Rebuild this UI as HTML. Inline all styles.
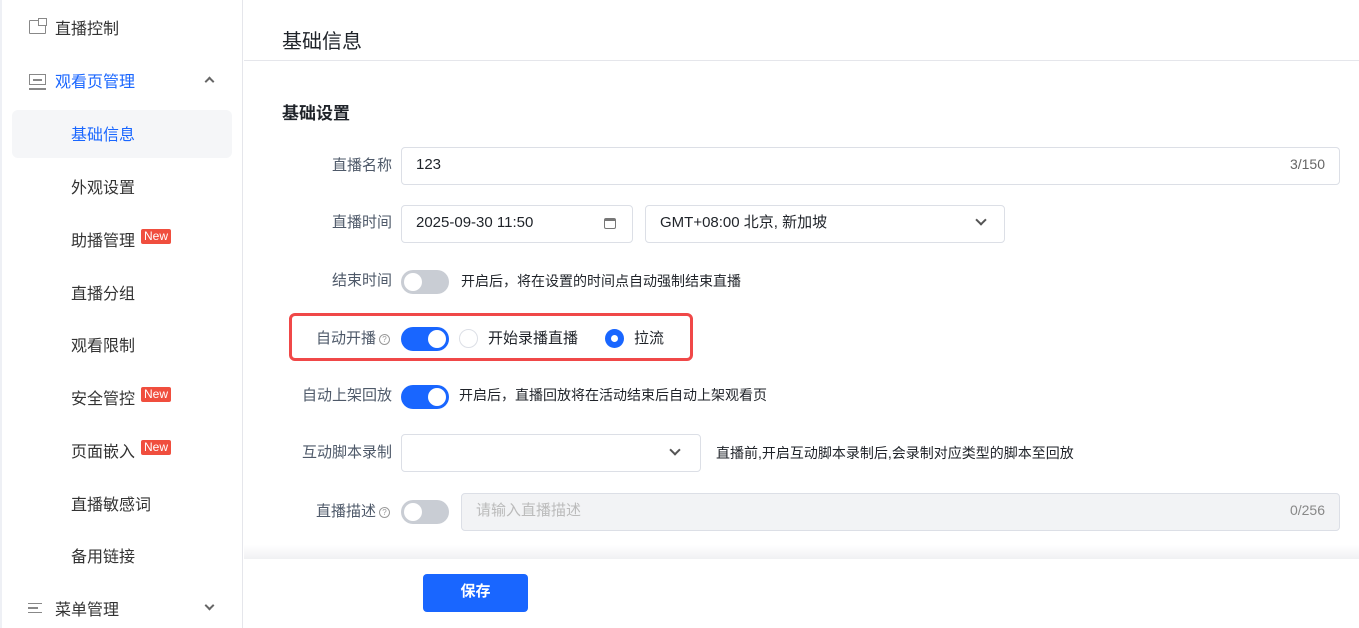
<!DOCTYPE html>
<html><head><meta charset="utf-8"><style>
*{margin:0;padding:0;box-sizing:border-box}
body{width:1359px;height:628px;overflow:hidden;background:#fff;font-family:"Liberation Sans","Noto Sans CJK SC",sans-serif;color:#1f2329;position:relative}
.a{position:absolute;white-space:nowrap}
.side{position:absolute;left:0;top:0;width:243px;height:628px;border-right:1px solid #e5e6eb;border-left:2px solid #eef0f5}
.mi{position:absolute;font-size:16px;color:#333;margin-top:-3px}
.new{display:inline-block;background:#f04e3e;color:#fff;font-size:12px;line-height:15px;padding:0 3px;border-radius:2px;position:relative;top:-6px;margin-left:6px}
.lbl{position:absolute;font-size:15px;color:#4e5969;text-align:right;width:110px;left:282px;margin-top:-3px}
.inp{position:absolute;border:1px solid #dcdfe6;border-radius:4px;background:#fff;font-size:15px;padding-left:14px;line-height:33px}
.sw{position:absolute;width:48px;height:24px;border-radius:12px;background:#c9cdd4}
.sw::after{content:"";position:absolute;top:3px;left:3px;width:18px;height:18px;border-radius:50%;background:#fff}
.sw.on{background:#1966ff}
.sw.on::after{left:27px}
.t{position:absolute;font-size:14px;color:#1f2329;margin-top:-2px}
.q{display:inline-block;width:11px;height:11px;border:1px solid #999;border-radius:50%;font-size:8px;line-height:9px;text-align:center;color:#999;vertical-align:1px;margin-left:3px}
.chev{position:absolute;width:8px;height:8px;border-right:2px solid #555;border-bottom:2px solid #555;transform:rotate(45deg)}
</style></head><body>
<div class="side">
<div class="a" style="left:27px;top:20px;width:17px;height:14px;border:1.5px solid #888;border-radius:1px"></div>
<div class="a" style="left:36px;top:18px;width:9px;height:8px;border:1.5px solid #888;background:#fff"></div>
<div class="mi" style="left:53px;top:18px">直播控制</div>
<div class="a" style="left:27px;top:74px;width:17px;height:11px;border:1.5px solid #888"></div>
<div class="a" style="left:31px;top:79px;width:9px;height:1.5px;background:#888"></div>
<div class="a" style="left:27px;top:88px;width:17px;height:1.5px;background:#888"></div>
<div class="mi" style="left:53px;top:71px;color:#1966ff">观看页管理</div>
<div class="a" style="left:204px;top:78px;width:7px;height:7px;border-left:2px solid #666;border-top:2px solid #666;transform:rotate(45deg)"></div>
<div class="a" style="left:10px;top:110px;width:220px;height:48px;background:#f5f6f8;border-radius:6px"></div>
<div class="mi" style="left:69px;top:124px;color:#1966ff">基础信息</div>
<div class="mi" style="left:69px;top:177px">外观设置</div>
<div class="mi" style="left:69px;top:230px">助播管理<span class="new">New</span></div>
<div class="mi" style="left:69px;top:283px">直播分组</div>
<div class="mi" style="left:69px;top:335px">观看限制</div>
<div class="mi" style="left:69px;top:388px">安全管控<span class="new">New</span></div>
<div class="mi" style="left:69px;top:441px">页面嵌入<span class="new">New</span></div>
<div class="mi" style="left:69px;top:494px">直播敏感词</div>
<div class="mi" style="left:69px;top:546px">备用链接</div>
<div class="a" style="left:26px;top:603px;width:14px;height:10px;border-top:1.5px solid #888;border-bottom:1.5px solid #888"></div>
<div class="a" style="left:26px;top:607px;width:10px;height:1.5px;background:#888"></div>
<div class="mi" style="left:53px;top:599px">菜单管理</div>
<div class="a" style="left:204px;top:602px;width:7px;height:7px;border-right:2px solid #666;border-bottom:2px solid #666;transform:rotate(45deg)"></div>
</div>
<div class="a" style="left:282px;top:25px;font-size:20px">基础信息</div>
<div class="a" style="left:244px;top:60px;width:1115px;height:1px;background:#e5e6eb"></div>
<div class="a" style="left:282px;top:99px;font-size:17px;font-weight:bold">基础设置</div>

<div class="lbl" style="top:157px">直播名称</div>
<div class="inp" style="left:401px;top:147px;width:939px;height:38px">123<span style="position:absolute;right:14px;color:#666;font-size:14px">3/150</span></div>

<div class="lbl" style="top:214px">直播时间</div>
<div class="inp" style="left:401px;top:205px;width:232px;height:38px">2025-09-30 11:50</div>
<div class="a" style="left:604px;top:218px;width:12px;height:11px;border:1.5px solid #777;border-radius:2px;border-top-width:3px"></div>
<div class="inp" style="left:645px;top:205px;width:360px;height:38px">GMT+08:00 北京, 新加坡</div>
<div class="chev" style="left:977px;top:216px"></div>

<div class="lbl" style="top:272px">结束时间</div>
<div class="sw" style="left:401px;top:270px"></div>
<div class="t" style="left:461px;top:273px">开启后，将在设置的时间点自动强制结束直播</div>

<div class="a" style="left:289px;top:313px;width:404px;height:48px;border:3px solid #f04848;border-radius:6px"></div>
<div class="lbl" style="top:330px;width:108px">自动开播<span class="q">?</span></div>
<div class="sw on" style="left:401px;top:327px"></div>
<div class="a" style="left:459px;top:329px;width:19px;height:19px;border:1px solid #dcdfe6;border-radius:50%"></div>
<div class="a" style="left:488px;top:327px;font-size:15px">开始录播直播</div>
<div class="a" style="left:605px;top:329px;width:19px;height:19px;border-radius:50%;background:#1966ff"></div>
<div class="a" style="left:611px;top:335px;width:7px;height:7px;border-radius:50%;background:#fff"></div>
<div class="a" style="left:634px;top:327px;font-size:15px">拉流</div>

<div class="lbl" style="top:387px">自动上架回放</div>
<div class="sw on" style="left:401px;top:385px"></div>
<div class="t" style="left:459px;top:387px">开启后，直播回放将在活动结束后自动上架观看页</div>

<div class="lbl" style="top:444px">互动脚本录制</div>
<div class="inp" style="left:401px;top:434px;width:300px;height:38px"></div>
<div class="chev" style="left:671px;top:446px"></div>
<div class="t" style="left:716px;top:445px">直播前,开启互动脚本录制后,会录制对应类型的脚本至回放</div>

<div class="lbl" style="top:503px;width:108px">直播描述<span class="q">?</span></div>
<div class="sw" style="left:401px;top:500px"></div>
<div class="inp" style="left:461px;top:493px;width:879px;height:38px;background:#f2f3f5;color:#bbb">请输入直播描述<span style="position:absolute;right:14px;color:#888;font-size:14px">0/256</span></div>

<div class="a" style="left:244px;top:545px;width:1115px;height:14px;background:linear-gradient(#fff,#f0f1f3)"></div>
<div class="a" style="left:423px;top:574px;width:105px;height:38px;background:#1966ff;border-radius:4px;color:#fff;font-size:15px;font-weight:bold;text-align:center;line-height:36px">保存</div>
</body></html>
